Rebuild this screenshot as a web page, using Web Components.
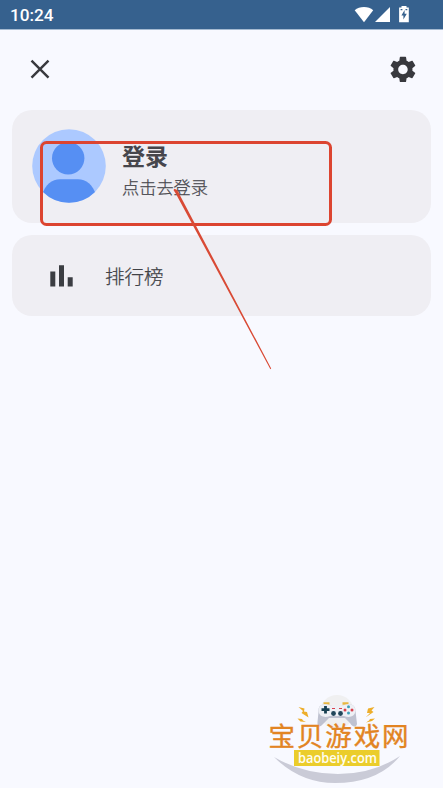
<!DOCTYPE html>
<html lang="zh-CN">
<head>
<meta charset="utf-8">
<title>登录</title>
<style>
html,body{margin:0;height:100%;overflow:hidden;background:#f8f9ff}
</style>
</head>
<body>
<profile-screen></profile-screen>
<script>
const define = (name, html) => {
  const t = document.createElement('template');
  t.innerHTML = html;
  customElements.define(name, class extends HTMLElement {
    constructor() {
      super();
      this.attachShadow({mode: 'open'}).append(t.content.cloneNode(true));
    }
  });
};

define('status-bar', `
<style>
:host{display:flex;box-sizing:border-box;height:29px;padding:0 33px 0 10px;align-items:center;justify-content:space-between;background:#36618e;color:#fff;font:500 17.200px/29px Roboto,sans-serif;box-shadow:0 1px 0 #a5bad1}
span{padding-top:2px}
svg{display:block}
</style>
<span>10:24</span>
<svg width="56" height="29" viewBox="354 0 56 29" fill="#fff">
<path d="M354.700 10.300Q358.500 7 364 7t9.200 3.300L364 22.300Z"/>
<path d="M390 7v15h-15Z"/>
<path fill-rule="evenodd" d="M401.500 6h5v1.600h2.300V22.200h-9.700V7.600h2.400ZM400.600 9v1.200h1.800V9ZM405.500 9v1.200h1.800V9ZM404.600 10l-3.200 5.500h2v4l3.400-5.700h-2.200Z"/>
</svg>`);

define('top-bar', `
<style>
:host{display:flex;box-sizing:border-box;height:81px;padding:0 26px 1px 26px;align-items:center;justify-content:space-between}
svg{display:block}
</style>
<svg width="28" height="28" viewBox="0 0 28 28" fill="none" stroke="#38393e" stroke-width="2.400"><path d="M5.500 5.700 22.500 22.700M22.500 5.700 5.500 22.700"/></svg>
<svg width="28" height="28" viewBox="0 0 28 28" fill="#38393e"><path transform="translate(-1.900 -1.300) scale(1.320 1.310)" d="M19.140 12.940c.04-.3.060-.61.060-.94 0-.32-.02-.64-.07-.94l2.030-1.580c.18-.14.230-.41.120-.61l-1.920-3.320c-.12-.22-.37-.29-.59-.22l-2.390.96c-.5-.38-1.030-.7-1.620-.94l-.36-2.540c-.04-.24-.24-.41-.48-.41h-3.840c-.24 0-.43.170-.47.410l-.36 2.540c-.59.240-1.130.570-1.620.940l-2.390-.96c-.22-.08-.47 0-.59.220L2.740 8.870c-.12.210-.08.470.120.610l2.030 1.580c-.05.3-.09.630-.09.940s.02.640.070.940l-2.030 1.580c-.18.140-.23.410-.12.610l1.920 3.320c.12.220.37.290.59.220l2.390-.96c.5.380 1.030.7 1.620.940l.36 2.540c.05.240.24.410.48.410h3.840c.24 0 .44-.17.470-.41l.36-2.540c.59-.24 1.130-.56 1.620-.94l2.390.96c.22.080.47 0 .59-.22l1.920-3.320c.12-.22.070-.47-.12-.61l-2.010-1.580zM12 15.600c-1.980 0-3.600-1.620-3.600-3.600s1.620-3.600 3.600-3.600 3.600 1.620 3.600 3.600-1.620 3.600-3.600 3.600z"/></svg>`);

define('surface-card', `
<style>
:host{display:flex;box-sizing:border-box;align-items:center;background:#efeef3;border-radius:20px}
</style><slot></slot>`);

define('user-avatar', `
<style>:host{display:block;width:74px;height:74px}svg{display:block}</style>
<svg width="74" height="74" viewBox="0 0 74 74">
<defs><clipPath id="c"><circle cx="37" cy="37" r="36.800"/></clipPath></defs>
<circle cx="37" cy="37" r="36.800" fill="#acc9ff"/>
<g clip-path="url(#c)" fill="#568ff3"><circle cx="36.200" cy="29.300" r="16.200"/><path d="M10 74V66C13 56 20 50.300 28 50.300H46C54 50.300 61 56 64 66V74Z"/></g>
</svg>`);

define('user-label', `
<style>
:host{display:flex;flex-direction:column;padding-top:9px;gap:3px;font-family:"Noto Sans CJK SC",sans-serif;color:#46464c}
.title{font-weight:700;font-size:23px;line-height:30px}
.sub{font-weight:300;font-size:17.200px;line-height:28px;-webkit-text-stroke:.25px currentColor}
</style>
<span class="title"><slot name="title"></slot></span><span class="sub"><slot></slot></span>`);

define('menu-entry', `
<style>
:host{display:flex;align-items:center;gap:32px;font:300 19.500px/30px "Noto Sans CJK SC",sans-serif;color:#404146;-webkit-text-stroke:.25px currentColor}
svg{display:block}
</style>
<svg width="23" height="24" viewBox="0 0 23 24" fill="#3b3d42"><path d="M.3 7.500h5v15h-5zM9 1.200h5v21.300H9zM17.700 13.200h5v9.300h-5z"/></svg>
<span><slot></slot></span>`);

define('pointer-overlay', `
<style>:host{display:block;position:absolute;left:0;top:0;pointer-events:none}svg{display:block}</style>
<svg width="443" height="400" viewBox="0 0 443 400">
<rect x="41.500" y="142.500" width="289" height="82" rx="5" fill="none" stroke="#dc4430" stroke-width="3"/>
<path d="M173.500 190 174.500 188.700 177 190 179 193.500 271.200 368.500 270.400 369.200 176 194Z" fill="#d94a35"/>
</svg>`);

define('site-badge', `
<style>:host{display:block;position:absolute;left:260px;top:685px}svg{display:block}</style>
<svg width="160" height="103" viewBox="260 685 160 103">
<path d="M274 757Q303 774 338 774T400 756Q378 783 335 783Q300 783 274 757Z" fill="#cacbd7"/>
<circle cx="337" cy="712" r="17" fill="#f0f0f1"/>
<path d="M323.500 703.500h6M342.500 703.500h6" stroke="#e8b641" stroke-width="2.500"/>
<path d="M318.500 712C318 706 321 704 326 704.500L332 706H341L347 704.500C352 703.500 355.500 706 355.500 711L357 724C356 728 352 727 350 723L345 718H329L323 724C320 728 317 727 317.500 722Z" fill="#bfc2d0"/>
<path d="M318.500 710.500C319 704.500 323 703.500 328 704.500L332 706H341L346 704.500C351 703.500 355 705 355.500 710.500C355 717 349 718 344 716H330C325 718 319 717 318.500 710.500Z" fill="#eef0f5"/>
<path d="M325.500 706v7.500M321.500 709.700h8" stroke="#173f51" stroke-width="2.800"/>
<g fill="#21465a"><circle cx="333.500" cy="713.500" r="2.400"/><circle cx="340.500" cy="713.500" r="2.400"/></g>
<g fill="#d9404d"><circle cx="345" cy="710" r="1.500"/><circle cx="352" cy="710" r="1.500"/><rect x="332" y="708" width="3" height="1"/><rect x="339" y="708" width="3" height="1"/></g>
<g fill="#3e9fb9"><circle cx="348.500" cy="706.800" r="1.500"/><circle cx="348.500" cy="713" r="1.500"/></g>
<g fill="#edae2b"><path d="M298.500 707 304.500 708.500 304 711.500 307 712 308.500 717.500 301.500 713 303 711ZM297.500 718.500 302 719 303 720.500 306 722 300.500 721.500ZM374.500 707 368 708.500 367 713 370 713 365.500 717.500 373.500 712 371.500 710.500ZM375 718.500 370 719 369 720.500 366 722.500 372 721Z"/></g>
<text x="268.500" y="746.300" font-family="Noto Sans CJK SC,sans-serif" font-size="26.500" letter-spacing="1.900" fill="#e28422" stroke="#e28422" stroke-width=".4">宝贝游戏网</text>
<rect x="294" y="750" width="85.500" height="16" fill="#ebcd2b"/>
<text x="298" y="763" font-family="Open Sans,sans-serif" font-size="15" font-weight="600" textLength="79" lengthAdjust="spacingAndGlyphs" fill="#fffdf0">baobeiy.com</text>
</svg>`);

define('profile-screen', `
<style>
:host{display:flex;flex-direction:column;position:relative;width:443px;height:788px;overflow:hidden;background:#f8f9ff}
main{display:flex;flex-direction:column;gap:12px;padding:0 12px}
.login{height:113px;padding:0 0 1px 20px;gap:16px}
.rank{height:81px;padding-left:38px}
</style>
<status-bar></status-bar>
<top-bar></top-bar>
<main>
<surface-card class="login"><user-avatar></user-avatar><user-label><span slot="title">登录</span>点击去登录</user-label></surface-card>
<surface-card class="rank"><menu-entry>排行榜</menu-entry></surface-card>
</main>
<pointer-overlay></pointer-overlay>
<site-badge></site-badge>`);
</script>
</body>
</html>
